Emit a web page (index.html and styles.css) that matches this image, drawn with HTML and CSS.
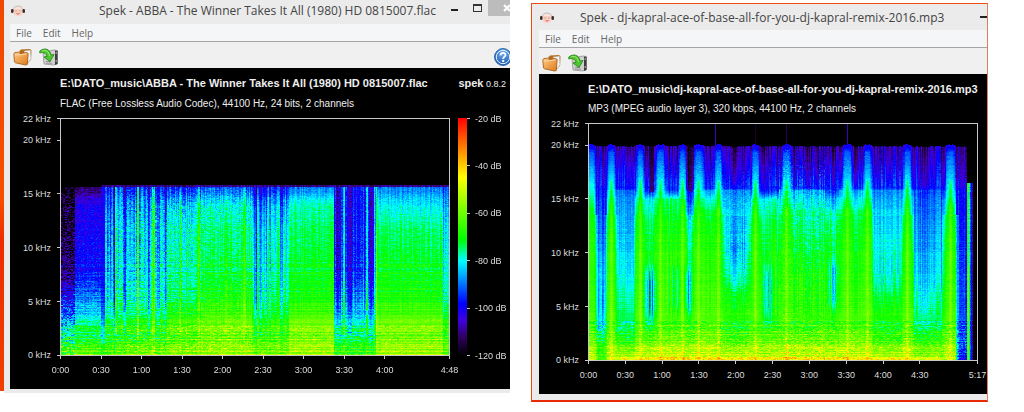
FILE: index.html
```html
<!DOCTYPE html>
<html lang="en">
<head>
    <meta charset="UTF-8">
    <meta name="viewport" content="width=device-width, initial-scale=1.0">

    <title>Spek</title>

    <link rel="stylesheet" href="styles.css">
</head>
<body>
    <!-- shared icons -->
    <svg class="sprites" aria-hidden="true">
        <defs>
            <linearGradient id="folder-fill" x1="0" y1="0" x2="1" y2="1">
                <stop offset="0" stop-color="#ffc987"/>
                <stop offset="1" stop-color="#dc7a14"/>
            </linearGradient>
            <radialGradient id="help-fill" cx=".5" cy=".25" r=".8">
                <stop offset="0" stop-color="#6fb0f5"/>
                <stop offset="1" stop-color="#1552a8"/>
            </radialGradient>
        </defs>
        <symbol id="spek" viewBox="0 0 14 12">
            <path d="M2 6C2 2.500 4 1 7 1s5 1.500 5 5" fill="none" stroke="#c4bcb8"/>
            <ellipse cx="7" cy="6.500" rx="4.800" ry="4.500" fill="#f8cfc0"/>
            <path d="M3 4.500Q7 0 11 4.500Q7 3 3 4.500" fill="#fbe9df"/>
            <rect x="0" y="4" width="2.500" height="4" rx="1.200" fill="#3b3030"/>
            <rect x="11.500" y="4" width="2.500" height="4" rx="1.200" fill="#3b3030"/>
            <path d="M5 5.500v1M9 5.500v1" stroke="#8c6a62" stroke-width=".8"/>
            <path d="M5.500 8.500q1.500 1 3 0" fill="none" stroke="#d8665c"/>
        </symbol>
        <symbol id="folder" viewBox="0 0 20 18">
            <path d="M6 3.500l2-2 9-.5 1.500 1.500-.5 9-3.500 4z" fill="#b86a18"/>
            <path d="M11 3l6.500-1 .5 9-3.500 4.500z" fill="#f4f4f4" stroke="#a9a9a9" stroke-width=".5"/>
            <path d="M.8 6l1-1.500 3.700-.3L7 5.500l6.500-1 1.700 1-.9 11L12.500 17 2.500 14.800 1.500 14z" fill="url(#folder-fill)" stroke="#9c5510" stroke-width=".8"/>
            <path d="M1.800 7l5-.2 6.700-1" fill="none" stroke="#ffe2bb" stroke-width=".8"/>
        </symbol>
        <symbol id="save" viewBox="0 0 20 18">
            <path d="M4 4l11-2 3.500.5v13L15 17 5 16z" fill="#cfcfcf" stroke="#888" stroke-width=".7"/>
            <path d="M16 2.500l2.500 .5v13L16 17z" fill="#3c3c3c"/>
            <path d="M16.500 5h1.500M16.500 13h1.500" stroke="#ddd"/>
            <path d="M7 13.500h5M7 15.200h6" stroke="#888" stroke-width=".8"/>
            <path d="M.8 3C5-.5 11 .5 12 7l3-.5L11 13.500 5 9l3-.7C7.500 5.500 4.500 3.800 .8 5z" fill="#4fc62c" stroke="#1c7d12" stroke-width=".8"/>
            <path d="M3 3c4-1.500 7 .5 7.500 5" fill="none" stroke="#b0f28f" stroke-width=".8"/>
        </symbol>
        <symbol id="help" viewBox="0 0 18 18">
            <circle cx="9" cy="9" r="8.500" fill="url(#help-fill)" stroke="#1f5597" stroke-width=".8"/>
            <circle cx="9" cy="9" r="6.700" fill="none" stroke="#e4f0ff"/>
            <path d="M6.500 7.500C6.500 4 11.800 4.200 11.500 7.200 11.300 8.800 9.200 8.700 9.200 11" fill="none" stroke="#fff" stroke-width="1.800"/>
            <rect x="8.200" y="12" width="2" height="2" fill="#fff"/>
        </symbol>
    </svg>

    <div class="desktop">
        <div class="wallpaper"></div>

        <section class="window">
            <header class="titlebar">
                <svg class="app-icon" aria-hidden="true"><use href="#spek"/></svg>
                <h1 class="window-title">Spek - ABBA - The Winner Takes It All (1980) HD 0815007.flac</h1>
                <div class="controls">
                    <button class="control minimize" aria-label="Minimize"></button>
                    <button class="control maximize" aria-label="Maximize"></button>
                    <button class="control close" aria-label="Close"><svg viewBox="0 0 8 8" aria-hidden="true"><path d="M1 1l6 6M7 1l-6 6"/></svg></button>
                </div>
            </header>
            <nav class="menu">
                <button>File</button>
                <button>Edit</button>
                <button>Help</button>
            </nav>
            <div class="toolbar">
                <button class="tool" aria-label="Open"><svg aria-hidden="true"><use href="#folder"/></svg></button>
                <button class="tool" aria-label="Save"><svg aria-hidden="true"><use href="#save"/></svg></button>
                <button class="tool tool-help" aria-label="About"><svg aria-hidden="true"><use href="#help"/></svg></button>
            </div>
            <main class="panel with-legend">
                <div class="info">
                    <h2 class="path">E:\DATO_music\ABBA - The Winner Takes It All (1980) HD 0815007.flac</h2>
                    <p class="version"><b>spek</b> 0.8.2</p>
                    <p class="format">FLAC (Free Lossless Audio Codec), 44100 Hz, 24 bits, 2 channels</p>
                </div>
                <ul class="freq-axis">
                    <li>22 kHz</li>
                    <li>20 kHz</li>
                    <li>15 kHz</li>
                    <li>10 kHz</li>
                    <li>5 kHz</li>
                    <li>0 kHz</li>
                </ul>
                <canvas id="flac" class="plot" width="388" height="236"></canvas>
                <div class="legend">
                    <div class="legend-bar"></div>
                    <ul class="level-axis">
                        <li>-20 dB</li>
                        <li>-40 dB</li>
                        <li>-60 dB</li>
                        <li>-80 dB</li>
                        <li>-100 dB</li>
                        <li>-120 dB</li>
                    </ul>
                </div>
                <ul class="time-axis time-flac">
                    <li>0:00</li>
                    <li>0:30</li>
                    <li>1:00</li>
                    <li>1:30</li>
                    <li>2:00</li>
                    <li>2:30</li>
                    <li>3:00</li>
                    <li>3:30</li>
                    <li>4:00</li>
                    <li>4:48</li>
                </ul>
            </main>
        </section>

        <section class="window window-framed">
            <header class="titlebar">
                <svg class="app-icon" aria-hidden="true"><use href="#spek"/></svg>
                <h1 class="window-title">Spek - dj-kapral-ace-of-base-all-for-you-dj-kapral-remix-2016.mp3</h1>
                <div class="controls">
                    <button class="control minimize" aria-label="Minimize"></button>
                </div>
            </header>
            <nav class="menu">
                <button>File</button>
                <button>Edit</button>
                <button>Help</button>
            </nav>
            <div class="toolbar">
                <button class="tool" aria-label="Open"><svg aria-hidden="true"><use href="#folder"/></svg></button>
                <button class="tool" aria-label="Save"><svg aria-hidden="true"><use href="#save"/></svg></button>
            </div>
            <main class="panel">
                <div class="info">
                    <h2 class="path">E:\DATO_music\dj-kapral-ace-of-base-all-for-you-dj-kapral-remix-2016.mp3</h2>
                    <p class="format">MP3 (MPEG audio layer 3), 320 kbps, 44100 Hz, 2 channels</p>
                </div>
                <ul class="freq-axis">
                    <li>22 kHz</li>
                    <li>20 kHz</li>
                    <li>15 kHz</li>
                    <li>10 kHz</li>
                    <li>5 kHz</li>
                    <li>0 kHz</li>
                </ul>
                <canvas id="mp3" class="plot" width="388" height="236"></canvas>
                <ul class="time-axis time-mp3">
                    <li>0:00</li>
                    <li>0:30</li>
                    <li>1:00</li>
                    <li>1:30</li>
                    <li>2:00</li>
                    <li>2:30</li>
                    <li>3:00</li>
                    <li>3:30</li>
                    <li>4:00</li>
                    <li>4:30</li>
                    <li>5:17</li>
                </ul>
            </main>
        </section>
    </div>
    <script src="spectrum.js"></script>
</body>
</html>
```
FILE: styles.css
```css
:root {
    --frame: #ebebeb;
    --orange: #f04a12;
    --axis: #c8c8c8;
}
* {
    box-sizing: border-box;
}
body {
    margin: 0;
    background-color: #fff;
    font-family: "Liberation Sans", Arial, sans-serif;
}
h1, h2, p, ul {
    margin: 0;
    padding: 0;
    font-weight: normal;
}
ul {
    list-style: none;
}
button {
    padding: 0;
    border: none;
    background: none;
    font: inherit;
    color: inherit;
}
.sprites {
    position: absolute;
    width: 0;
    height: 0;
}

.desktop {
    display: grid;
    grid-template-columns: 4px minmax(0, 506fr) minmax(0, 478fr);
    align-items: start;
    padding-right: 36px;
}
.wallpaper {
    align-self: stretch;
    margin-bottom: 11px;
    background: linear-gradient(#f04800, #f85000 50%, #ee2c00 62%, #f04000);
}

/* windows */
.window {
    border-left: 6px solid var(--frame);
    border-bottom: 4px solid var(--frame);
    background-color: #f0f0f0;
    overflow: hidden;
}
.window-framed {
    margin: 3px 0 0 21px;
    border: 1px solid #d9805f;
    border-left-color: var(--orange);
    border-top-color: var(--orange);
    border-bottom: 2px solid #e92a04;
    background-color: var(--frame);
    padding: 0 0 6px 7px;
}
.titlebar {
    display: flex;
    height: 24px;
    background-color: var(--frame);
}
.window-framed .titlebar {
    height: 26px;
    padding-top: 3px;
}
.app-icon {
    flex: none;
    width: 14px;
    height: 12px;
    margin: 5px 0 0 1px;
}
.window-title {
    flex: 1;
    min-width: 0;
    margin-left: 74px;
    font: 12px/22px "Open Sans", "Noto Sans", sans-serif;
    color: #444;
    white-space: nowrap;
}
.window-framed .window-title {
    margin-left: 26px;
}
.controls {
    display: flex;
    align-items: start;
}
.control {
    display: block;
}
.minimize {
    width: 7px;
    height: 2px;
    margin-top: 9px;
    background-color: #222;
}
.maximize {
    width: 9px;
    height: 8px;
    margin: 4px 6px 0 15px;
    border: 1px solid #333;
    border-top-width: 2px;
}
.close {
    width: 22px;
    height: 16px;
    background-color: #bcbcbc;
}
.close svg {
    display: block;
    width: 8px;
    height: 8px;
    margin-left: 15px;
    fill: none;
    stroke: #fff;
    stroke-width: 2;
}
.menu {
    display: flex;
    gap: 11px;
    height: 18px;
    padding-left: 6px;
    background-color: #f5f6f8;
    border-bottom: 1px solid #a5a5a5;
    font: 10px/16px "Open Sans", "Noto Sans", sans-serif;
    color: #666;
}
.toolbar {
    display: flex;
    gap: 6px;
    height: 26px;
    padding: 3px 0 0 3px;
    background-color: #f0f0f0;
}
.tool svg {
    display: block;
    width: 20px;
    height: 18px;
}
.tool-help {
    margin: 0 -3px 0 auto;
}

/* spectrogram panel */
.panel {
    display: grid;
    grid-template-columns: 49px minmax(0, 1fr) 9px;
    padding-bottom: 13px;
    background-color: #000;
    color: #ddd;
    font-size: 9px;
}
.with-legend {
    grid-template-columns: 50px minmax(0, 1fr) 60px;
}
.info {
    grid-column: 2 / 4;
    display: grid;
    grid-template-columns: 1fr auto;
    row-gap: 6px;
    padding: 8px 4px 7px 0;
    line-height: 14px;
    white-space: nowrap;
    color: #eee;
}
.path {
    font-size: 11px;
    font-weight: bold;
}
.version b {
    font-size: 11px;
}
.format {
    grid-column: 1;
    font-size: 10px;
}
.plot {
    grid-column: 2;
    display: block;
    width: 100%;
    border: 1px solid var(--axis);
}
.freq-axis {
    grid-column: 1;
    display: grid;
    grid-template-rows: 2fr repeat(4, 5fr) 1px;
}
.freq-axis li,
.level-axis li {
    display: flex;
    align-items: center;
    height: 1px;
}
.freq-axis li {
    justify-content: flex-end;
    gap: 6px;
}
.freq-axis li::after,
.level-axis li::before {
    content: "";
    width: 3px;
    height: 1px;
    background-color: var(--axis);
}
.legend {
    display: flex;
    padding-left: 8px;
}
.legend-bar {
    width: 9px;
    background: linear-gradient(#f00, #ff0 25%, #0f0 51%, #0ff 60%, #00f 78%, #4000e0 85%, #300060 92%, #000);
}
.level-axis {
    display: grid;
    grid-template-rows: repeat(5, 1fr) 1px;
    white-space: nowrap;
}
.level-axis li {
    gap: 5px;
}
.time-axis {
    grid-column: 2;
    display: grid;
}
.time-flac {
    grid-template-columns: repeat(8, 30fr) 48fr 1px;
}
.time-mp3 {
    grid-template-columns: repeat(9, 30fr) 47fr 1px;
}
.time-axis li {
    display: flex;
    flex-direction: column;
    align-items: center;
    gap: 5px;
    width: 1px;
    line-height: 12px;
}
.time-axis li::before {
    content: "";
    width: 1px;
    height: 3px;
    background-color: var(--axis);
}
```
FILE: spectrum.js
```javascript
// levels go from 0 (-20 dB) to 1 (-120 dB)
const palette = [
    [0, 255, 0, 0],
    [0.25, 255, 255, 0],
    [0.51, 0, 255, 0],
    [0.6, 0, 255, 255],
    [0.78, 0, 0, 255],
    [0.85, 64, 0, 224],
    [0.92, 48, 0, 96],
    [1, 0, 0, 0],
];

function interpolate(stops, at, index) {
    if (at <= stops[0][0]) return stops[0][index];
    for (let i = 1; i < stops.length; i++) {
        if (at <= stops[i][0]) {
            const a = stops[i - 1], b = stops[i];
            return a[index] + (b[index] - a[index]) * (at - a[0]) / (b[0] - a[0]);
        }
    }
    return stops[stops.length - 1][index];
}

// seeded noise, so the picture is the same on every load
function createRandom(seed) {
    return () => {
        seed = (seed * 1664525 + 1013904223) >>> 0;
        return seed / 4294967296;
    };
}

// segment: [end x, stripe strength, noise, level at each of rows]
function segmentLevel(segments, rows, x, y) {
    const s = segments.find((seg) => x < seg[0]) || segments[segments.length - 1];
    return interpolate(rows.map((row, i) => [row, s[3 + i]]), y, 1);
}

function draw(id, seed, level) {
    const canvas = document.getElementById(id);
    const ctx = canvas.getContext('2d');
    const { width, height } = canvas;
    const image = ctx.createImageData(width, height);
    const random = createRandom(seed);
    const columns = Array.from({ length: width }, () => random() - 0.5);
    const lines = Array.from({ length: height }, () => random() - 0.5);

    for (let y = 0; y < height; y++) {
        let grain = 0;
        for (let x = 0; x < width; x++) {
            if (x % 2 == 0 || random() > 0.6) grain = random() + random() - 1;
            const v = Math.min(1, Math.max(0.05, level(x, y, columns[x], lines[y], grain)));
            const i = (y * width + x) * 4;
            for (let c = 0; c < 3; c++) image.data[i + c] = interpolate(palette, v, c + 1);
            image.data[i + 3] = 255;
        }
    }
    ctx.putImageData(image, 0, 0);
}

const flacRows = [68, 85, 110, 150, 180, 200, 222, 236];
const flacSegments = [
    [14, 0.02, 0.14, 1, 0.97, 0.96, 0.92, 0.8, 0.68, 0.53, 0.42],
    [40, 0.04, 0.06, 0.93, 0.81, 0.8, 0.78, 0.69, 0.59, 0.49, 0.38],
    [44, 0.04, 0.04, 0.82, 0.81, 0.81, 0.79, 0.76, 0.69, 0.57, 0.42],
    [62, 0.16, 0.07, 0.76, 0.7, 0.67, 0.65, 0.61, 0.54, 0.48, 0.4],
    [105, 0.12, 0.08, 0.76, 0.66, 0.63, 0.61, 0.58, 0.51, 0.45, 0.37],
    [140, 0.09, 0.07, 0.76, 0.63, 0.58, 0.56, 0.54, 0.45, 0.42, 0.34],
    [191, 0.08, 0.06, 0.73, 0.6, 0.56, 0.53, 0.49, 0.42, 0.39, 0.33],
    [228, 0.1, 0.05, 0.75, 0.64, 0.59, 0.56, 0.53, 0.48, 0.43, 0.36],
    [273, 0.06, 0.04, 0.7, 0.57, 0.54, 0.51, 0.49, 0.41, 0.37, 0.33],
    [315, 0.12, 0.06, 0.79, 0.79, 0.78, 0.77, 0.7, 0.62, 0.52, 0.43],
    [382, 0.06, 0.04, 0.7, 0.61, 0.55, 0.51, 0.49, 0.41, 0.38, 0.33],
    [388, 0.1, 0.05, 0.74, 0.67, 0.63, 0.6, 0.58, 0.5, 0.46, 0.4],
];
// [x, width, change]
const flacStripes = [
    [52, 2, 0.12], [54, 2, -0.12], [60, 2, -0.1], [62, 3, 0.12], [76, 2, -0.14], [87, 2, 0.1], [91, 3, -0.14],
    [96, 3, 0.08], [104, 2, 0.08], [118, 2, -0.08], [137, 2, -0.07], [164, 2, -0.05], [182, 3, -0.06],
    [193, 3, 0.14], [198, 3, 0.12], [203, 3, 0.08], [208, 2, 0.06], [219, 3, 0.08], [225, 3, 0.05],
    [276, 4, 0.06], [280, 1, -0.1], [282, 2, -0.18], [287, 4, 0.09], [292, 1, -0.1], [302, 1, -0.12],
    [305, 2, -0.15], [309, 2, 0.05], [313, 3, -0.12],
];

draw('flac', 7, (x, y, column, line, grain) => {
    if (y < 66) return 1;
    if (y < 68) return x > 40 ? 0.9 + column * 0.1 : 1;
    const s = flacSegments.find((seg) => x < seg[0]) || flacSegments[11];
    let v = segmentLevel(flacSegments, flacRows, x, y);
    const fade = y > 190 ? 0.35 : y > 150 ? 0.7 : 1;
    for (const [start, width, change] of flacStripes) {
        if (x >= start && x < start + width) v += change * (y > 215 ? 0.2 : y > 190 ? 0.6 : 1);
    }
    v += column * s[1] * fade + grain * s[2];
    v += line * (y > 140 ? 0.05 : 0.015);
    if (y > 205) v += line * 0.05 + grain * 0.04;
    return v;
});

const mp3Rows = [22, 45, 64, 66, 75, 100, 150, 190, 215, 236];
const mp3Segments = [
    [5, 0.03, 0.02, 0.84, 0.8, 0.76, 0.72, 0.68, 0.6, 0.55, 0.53, 0.52, 0.47],
    [18, 0.08, 0.03, 0.88, 0.81, 0.78, 0.77, 0.75, 0.72, 0.65, 0.6, 0.5, 0.43],
    [25, 0.04, 0.02, 0.86, 0.8, 0.74, 0.7, 0.65, 0.59, 0.51, 0.48, 0.42, 0.4],
    [46, 0.06, 0.03, 0.89, 0.81, 0.77, 0.71, 0.68, 0.66, 0.61, 0.55, 0.5, 0.3],
    [66, 0.09, 0.03, 0.95, 0.87, 0.79, 0.78, 0.62, 0.55, 0.51, 0.49, 0.44, 0.28],
    [97, 0.08, 0.03, 0.92, 0.84, 0.77, 0.76, 0.56, 0.52, 0.47, 0.46, 0.4, 0.26],
    [105, 0.07, 0.04, 0.98, 0.94, 0.9, 0.77, 0.75, 0.62, 0.53, 0.48, 0.43, 0.28],
    [130, 0.07, 0.03, 0.9, 0.83, 0.76, 0.68, 0.6, 0.51, 0.47, 0.45, 0.39, 0.27],
    [162, 0.06, 0.04, 0.9, 0.84, 0.76, 0.69, 0.66, 0.62, 0.55, 0.48, 0.45, 0.28],
    [190, 0.09, 0.03, 0.91, 0.83, 0.78, 0.77, 0.6, 0.54, 0.49, 0.47, 0.42, 0.28],
    [236, 0.08, 0.05, 0.9, 0.83, 0.75, 0.66, 0.61, 0.56, 0.49, 0.47, 0.4, 0.27],
    [250, 0.1, 0.04, 0.9, 0.82, 0.76, 0.74, 0.65, 0.54, 0.49, 0.47, 0.41, 0.27],
    [283, 0.08, 0.03, 0.9, 0.82, 0.74, 0.66, 0.6, 0.52, 0.48, 0.45, 0.39, 0.27],
    [313, 0.06, 0.03, 0.88, 0.82, 0.75, 0.69, 0.66, 0.63, 0.56, 0.49, 0.46, 0.29],
    [325, 0.05, 0.03, 0.88, 0.82, 0.76, 0.69, 0.65, 0.6, 0.52, 0.47, 0.43, 0.3],
    [353, 0.09, 0.03, 0.88, 0.82, 0.78, 0.73, 0.71, 0.68, 0.63, 0.56, 0.48, 0.32],
    [367, 0.05, 0.03, 0.88, 0.82, 0.77, 0.74, 0.68, 0.62, 0.55, 0.5, 0.44, 0.36],
    [378, 0.12, 0.04, 0.88, 0.84, 0.8, 0.77, 0.77, 0.76, 0.73, 0.72, 0.71, 0.76],
];
// [x, spread]
const peaks = [
    [2, 4], [22, 4], [51, 4], [71, 5], [93, 4], [109, 5], [129, 4],
    [166, 4], [197, 5], [258, 5], [278, 4], [318, 4], [361, 5],
];
const peakRows = [[22, 0.8], [28, 0.72], [50, 0.64], [70, 0.57], [85, 0.51], [120, 0.47], [180, 0.45], [215, 0.4], [236, 0.28]];
// cooler patches: [x, y, x radius, y radius, change]
const patches = [
    [61, 172, 6, 28, 0.2], [85, 165, 5, 24, 0.1], [99, 168, 4, 24, 0.14], [11, 190, 4, 30, 0.06],
    [147, 140, 14, 24, 0.05], [180, 170, 6, 28, 0.14], [244, 160, 6, 25, 0.11], [298, 150, 14, 20, 0.04],
    [147, 112, 12, 24, 0.04],
];

draw('mp3', 21, (x, y, column, line, grain) => {
    const spikes = { 126: 0.87, 166: 0.96, 197: 0.93, 258: 0.87 };
    if (x > 383) return 1;
    if (x > 377) {
        if (y < 59) return 1;
        return [0.5, 0.46, 0.6, 0.72, 0.8, 0.88][x - 378] + line * 0.1 - (y > 140 && x < 381 ? 0.06 : 0);
    }
    let glow = 0;
    for (const [center, spread] of peaks) {
        const wide = spread * (y > 90 ? 1.3 : 1);
        glow = Math.max(glow, Math.exp(-Math.pow((x - center) / wide, 4)));
    }
    if (y < 22 - glow * 2 + column) return spikes[x] || 1;
    const s = mp3Segments.find((seg) => x < seg[0]);
    let v = segmentLevel(mp3Segments, mp3Rows, x, y) + column * s[1] * (y > 190 ? 0.3 : 1);
    if (y < 62) v += column * 0.08;
    // missing band around the breaks
    if (((x > 60 && x < 65) || (x > 99 && x < 104)) && y < 68) v = 1 - y * 0.0015;
    const peak = interpolate(peakRows, Math.max(22, y), 1);
    v += (Math.min(v, peak) - v) * glow;
    for (const [center] of peaks) {
        if (Math.abs(x - center) < 2 && x > 8 && y > 55) v -= 0.06 * (1 - Math.abs(x - center) / 3);
    }
    for (const [px, py, rx, ry, change] of patches) {
        const d = Math.pow((x - px) / rx, 4) + Math.pow((y - py) / ry, 4);
        v += change * Math.exp(-d) * (0.8 + column);
    }
    if ((x > 110 && x < 162 || x > 190 && x < 313) && y > 84 && y < 92) v -= 0.02;
    v += grain * s[2] + line * (y > 100 ? 0.03 : 0.01);
    if (y > 196) v += line * 0.05 + grain * 0.06;
    if (y > 232 && x > 25 && x < 355) v -= 0.06;
    return v;
});
```
